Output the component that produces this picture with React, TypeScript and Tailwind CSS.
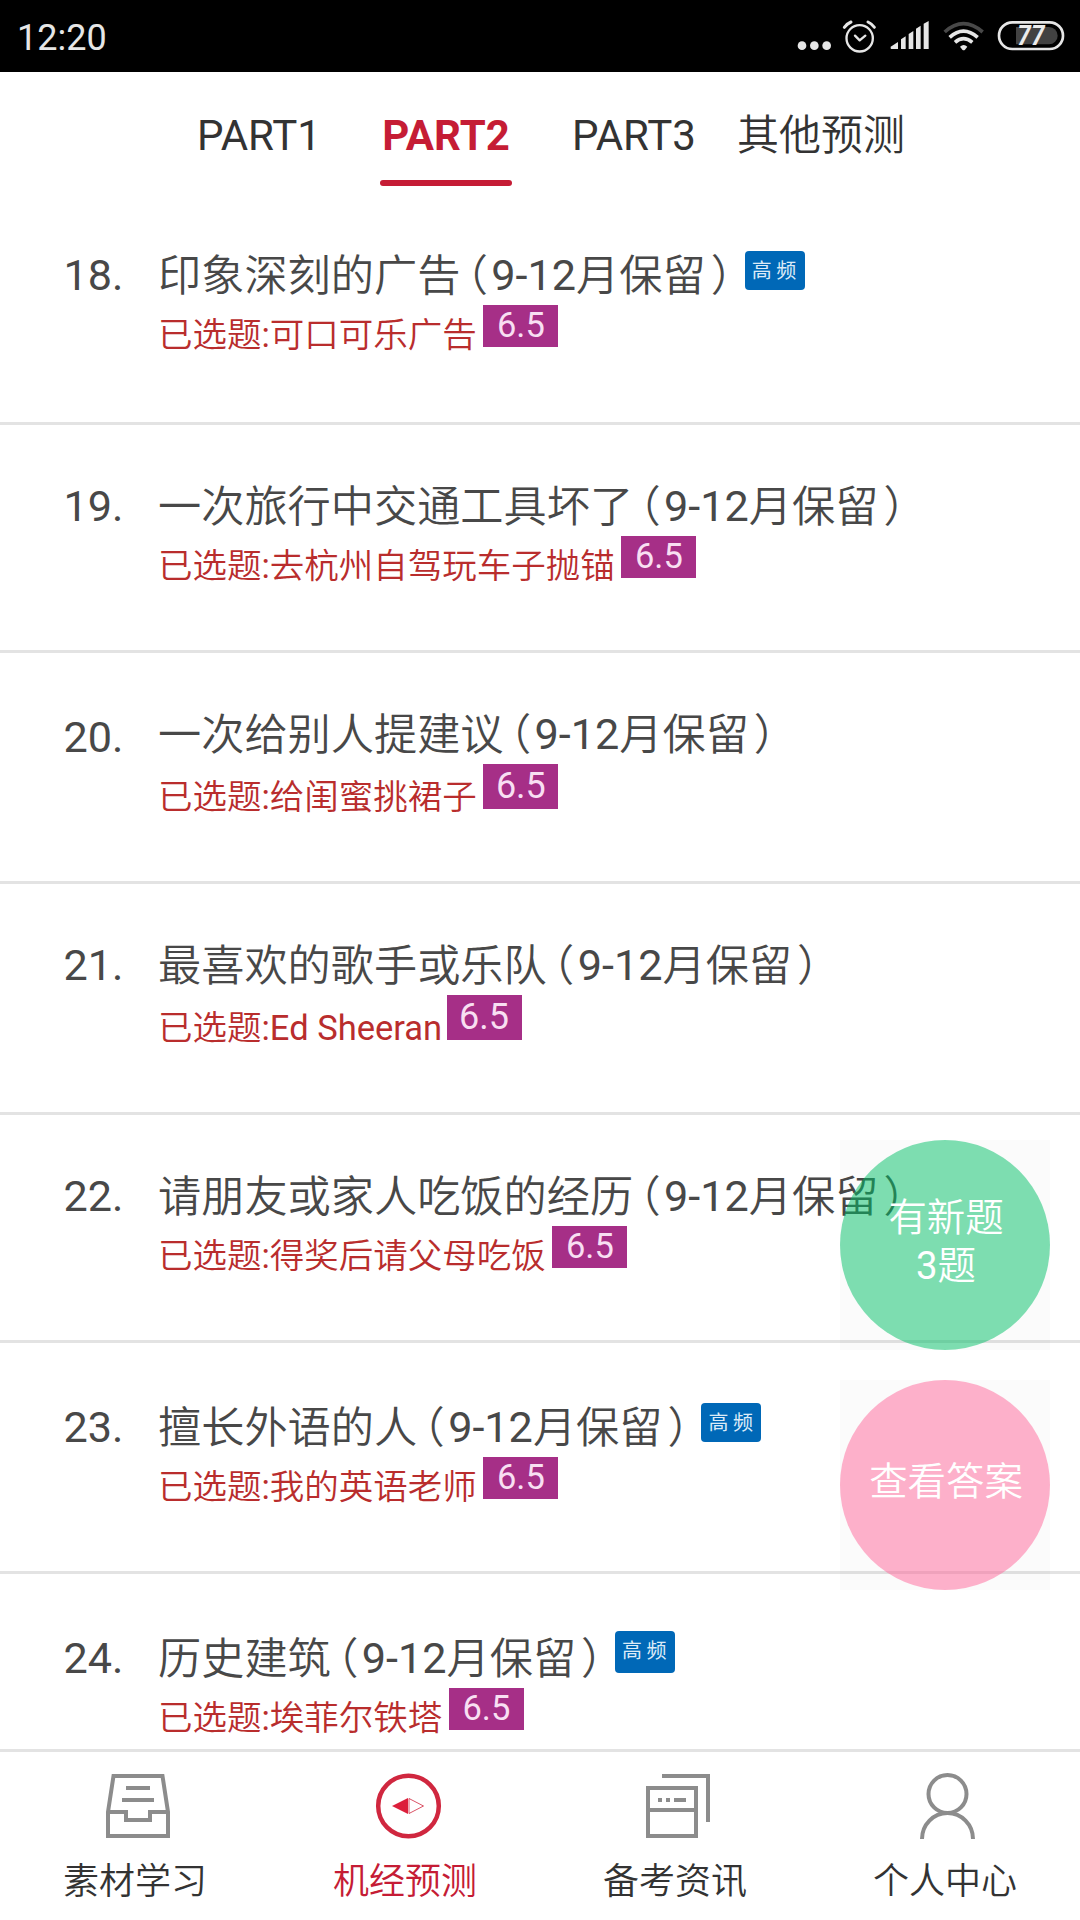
import React, { useState } from "react";
import clsx from "clsx";

type Topic = {
  no: number;
  title: string;
  answer: string;
  hot?: boolean;
  row: string;
  titleShift?: string;
  answerShift?: string;
  score: string;
  hotSize?: string;
};

const SCORE = "mt-[2px] h-[42px] text-[34.5px] leading-[41px]";
const SCORE_TALL = "mt-[2px] h-[45px] text-[36px] leading-[45px]";

const topics: Topic[] = [
  { no: 18, title: "印象深刻的广告", answer: "可口可乐广告", hot: true, row: "h-[231px] pt-[58px]", score: SCORE },
  { no: 19, title: "一次旅行中交通工具坏了", answer: "去杭州自驾玩车子抛锚", row: "h-[228px] pt-[58px]", score: SCORE },
  {
    no: 20,
    title: "一次给别人提建议",
    answer: "给闺蜜挑裙子",
    row: "h-[231px] pt-[61px]",
    titleShift: "-mt-[3px]",
    answerShift: "pt-[3px] mr-[6.5px]",
    score: SCORE_TALL,
  },
  {
    no: 21,
    title: "最喜欢的歌手或乐队",
    answer: "Ed Sheeran",
    row: "h-[231px] pt-[58px]",
    answerShift: "pt-[3px] mr-[4.5px]",
    score: SCORE_TALL,
  },
  { no: 22, title: "请朋友或家人吃饭的经历", answer: "得奖后请父母吃饭", row: "h-[228px] pt-[58px]", score: SCORE },
  { no: 23, title: "擅长外语的人", answer: "我的英语老师", hot: true, row: "h-[231px] pt-[61px]", score: SCORE },
  {
    no: 24,
    title: "历史建筑",
    answer: "埃菲尔铁塔",
    hot: true,
    row: "h-[231px] pt-[61px]",
    score: SCORE,
    hotSize: "mt-[-4px] h-[42px] leading-[38px]",
  },
];

const StatusBar: React.FC = () => (
  <div className="flex h-[72px] shrink-0 items-center justify-between bg-black pl-[17px] pr-[15px]">
    <span className="pt-[3px] text-[36px] leading-none text-[#e6e6e6]">12:20</span>
    <div className="flex items-center">
      {/* more */}
      <svg className="h-9 w-9" viewBox="48 54 108 108" fill="#e6e6e6">
        <circle cx="66" cy="137" r="13" />
        <circle cx="103" cy="137" r="13" />
        <circle cx="140" cy="137" r="13" />
      </svg>
      {/* alarm */}
      <svg
        className="ml-[10px] h-9 w-[35px]"
        viewBox="186 54 105 108"
        fill="none"
        stroke="#e6e6e6"
        strokeWidth="7"
        strokeLinecap="round"
      >
        <circle cx="239" cy="115" r="39.5" />
        <path d="M225 107l14 14 17-14" strokeLinejoin="round" />
        <path d="M193 82q8-11 20-16M264 66q13 6 19 16" strokeWidth="9" />
      </svg>
      {/* signal */}
      <svg className="ml-[13px] h-9 w-10" viewBox="330 54 120 108" fill="#e6e6e6">
        <path d="M332 140l22-14v21h-20q-2 0-2-2z" />
        <path d="M363 118l14-9v38h-14zM386 102l14-9v54h-14zM408 86l14-9v70h-14zM431 71l15-8v84h-15z" />
      </svg>
      {/* wifi */}
      <svg className="ml-[13px] h-9 w-[41px]" viewBox="489 54 123 108" fill="none" stroke="#e6e6e6" strokeWidth="11">
        <path d="M494 96q56-50 114 0" stroke="#484848" />
        <path d="M509 112q41-37 84 0" />
        <path d="M525 127q25-22 52 0" />
        <path d="M540 140q11-10 22 0l-7 9q-4 4-8 0z" fill="#e6e6e6" stroke="none" />
      </svg>
      {/* battery */}
      <svg className="ml-[13px] h-9 w-[68px]" viewBox="651 54 204 108">
        <rect x="657" y="67" width="192" height="80" rx="40" fill="none" stroke="#e6e6e6" strokeWidth="8" />
        <path d="M708 81h99a26 26 0 0 1 0 52h-99z" fill="#424242" />
        <text
          x="753"
          y="135"
          textAnchor="middle"
          fontSize="80"
          fontWeight="700"
          fontStyle="italic"
          fontFamily="Roboto, sans-serif"
          textLength="82"
          lengthAdjust="spacingAndGlyphs"
          fill="#ececec"
        >
          77
        </text>
      </svg>
    </div>
  </div>
);

const TrayIcon = () => (
  <svg className="size-16" viewBox="0 0 64 64" fill="none" stroke="#8c8c8c" strokeWidth="4">
    <path d="M2 38L7.500 2h49L62 38v24H2z" />
    <path d="M2 38h18v8h24v-8h18M20 14h24M16 26h32" />
  </svg>
);

const CompassIcon = () => (
  <svg className="size-16 overflow-visible" viewBox="0 0 64 64" fill="none" stroke="#d0273f">
    <circle cx="32.500" cy="32" r="30.300" strokeWidth="4.500" />
    <path d="M16 32l16-8v16z" fill="#dc1f3b" stroke="none" />
    <path d="M33 24.500L47.500 32 33 39.500z" strokeWidth="0.800" />
  </svg>
);

const NewsIcon = () => (
  <svg className="size-16" viewBox="0 0 64 64" fill="none" stroke="#8c8c8c" strokeWidth="4">
    <path d="M2 14h48v48H2zM2 36h48M16 2h46v46" />
    <path d="M12 26h4M20 26h4M28 26h12" />
  </svg>
);

const PersonIcon = () => (
  <svg className="size-16 overflow-visible" viewBox="0 0 64 64" fill="none" stroke="#8c8c8c" strokeWidth="4">
    <circle cx="31.500" cy="20" r="19" />
    <path d="M6 65a25.500 26 0 0 1 51 0" />
  </svg>
);

const navItems = [
  { label: "素材学习", icon: <TrayIcon /> },
  { label: "机经预测", icon: <CompassIcon /> },
  { label: "备考资讯", icon: <NewsIcon /> },
  { label: "个人中心", icon: <PersonIcon /> },
];

const tabs = [
  { label: "PART1", box: "w-[132px]" },
  { label: "PART2", box: "ml-[55px] w-[132px]" },
  { label: "PART3", box: "ml-[56px] w-[132px]" },
  { label: "其他预测", box: "ml-[31px] w-[180px]" },
];

const TopicRow: React.FC<{ topic: Topic }> = ({ topic }) => (
  <li className={clsx("flex shrink-0 border-b-3 border-[#e3e3e3] pl-[63.5px]", topic.row)}>
    <span className="w-[94.5px] text-[43.2px] leading-[48px] text-[#484848]">{topic.no}.</span>
    <div className={clsx("whitespace-nowrap", topic.titleShift)}>
      <div className="flex h-[51px] text-[43.2px] leading-[49px] text-[#484848]">
        <span>{topic.title}</span>
        <span className="ml-[6px] w-[25px] [font-feature-settings:'halt']">（</span>
        <span className="leading-[48px] font-['Roboto',sans-serif]">9-12</span>
        <span>月保留</span>
        <span className="ml-[5px] w-[34px] [font-feature-settings:'halt']">）</span>
        {topic.hot && (
          <span
            className={clsx(
              "w-[60px] rounded-[4px] bg-[#0068b7] pl-[7px] font-['Noto_Sans_CJK_SC',sans-serif] text-[20px] tracking-[4.5px] text-[#dcebf7]",
              topic.hotSize ?? "mt-[-1px] h-[39px] leading-[37px]"
            )}
          >
            高频
          </span>
        )}
      </div>
      <div className="flex">
        <span
          className={clsx(
            "flex mt-[8px] text-[34.5px] leading-[48px] text-[#b92d2d]",
            topic.answerShift ?? "mr-[6.5px]"
          )}
        >
          <span>已选题</span>
          <span className="font-['Roboto',sans-serif]">:</span>
          <span>{topic.answer}</span>
        </span>
        <span className={clsx("w-[75px] bg-[#a62f87] text-center text-[#f8dff2]", topic.score)}>6.5</span>
      </div>
    </div>
  </li>
);

export default function App() {
  const [activeTab, setActiveTab] = useState("PART2");
  const [activeNav, setActiveNav] = useState("机经预测");

  return (
    <div className="relative flex h-[1920px] w-[1080px] flex-col overflow-hidden bg-white font-['Roboto','Noto_Sans_CJK_SC_DemiLight','Noto_Sans_CJK_SC_Light','Noto_Sans_CJK_SC',sans-serif]">
      <StatusBar />

      <div className="flex h-[122px] shrink-0 pl-[193px]">
        {tabs.map((tab) => (
          <button
            key={tab.label}
            onClick={() => setActiveTab(tab.label)}
            className={clsx(
              "flex shrink-0 flex-col items-center whitespace-nowrap pt-[40px] text-[42px] leading-[48px]",
              tab.box,
              activeTab === tab.label ? "font-bold text-[#c51c35]" : "text-[#333333]"
            )}
          >
            {tab.label}
            {activeTab === tab.label && <span className="mt-[20px] h-[6px] w-full rounded-full bg-[#c51c35]" />}
          </button>
        ))}
      </div>

      <ul className="flex min-h-0 flex-1 flex-col overflow-hidden">
        {topics.map((topic) => (
          <TopicRow key={topic.no} topic={topic} />
        ))}
      </ul>

      <nav className="grid h-[171px] shrink-0 grid-cols-4 border-t-3 border-[#e3e3e3] bg-white">
        {navItems.map((item) => (
          <button
            key={item.label}
            onClick={() => setActiveNav(item.label)}
            className={clsx(
              "flex flex-col items-center pt-[22px] text-[36px] leading-[48px]",
              activeNav === item.label ? "text-[#c51c35]" : "text-[#333333]"
            )}
          >
            <span className="ml-[6px]">{item.icon}</span>
            <span className="mt-[20px]">{item.label}</span>
          </button>
        ))}
      </nav>

      {/* floating buttons over the list */}
      <div className="absolute top-[1140px] left-[840px] flex flex-col gap-[30px] text-center text-[38.4px] leading-[48px] text-white">
        <div className="size-[210px] bg-black/[0.015]">
          <button className="flex size-full flex-col items-center rounded-full bg-[#00bf67]/50 pt-[54px] pl-[2px]">
            <span>有新题</span>
            <span className="flex">
              <span className="font-['Roboto',sans-serif]">3</span>
              <span>题</span>
            </span>
          </button>
        </div>
        <div className="size-[210px] bg-black/[0.015]">
          <button className="flex size-full flex-col items-center rounded-full bg-[#ff6599]/50 pt-[78px] pl-[2px]">
            <span>查看答案</span>
          </button>
        </div>
      </div>
    </div>
  );
}
